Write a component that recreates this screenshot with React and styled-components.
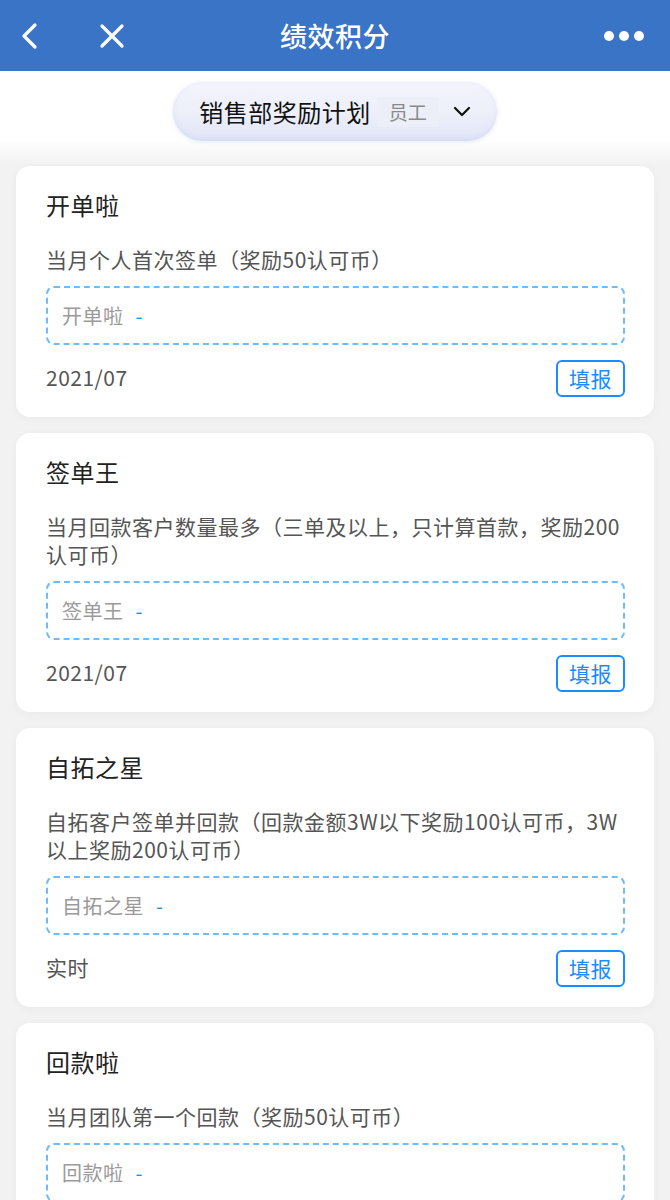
import React from 'react'
import styled, { createGlobalStyle } from 'styled-components'

const GlobalStyle = createGlobalStyle`
  body {
    margin: 0;
    background: #f2f2f2;
    font-family: "Noto Sans CJK SC", "Noto Sans", sans-serif;
  }
`

const items = [
  { title: '开单啦', desc: '当月个人首次签单（奖励50认可币）', time: '2021/07' },
  { title: '签单王', desc: '当月回款客户数量最多（三单及以上，只计算首款，奖励200认可币）', time: '2021/07' },
  { title: '自拓之星', desc: '自拓客户签单并回款（回款金额3W以下奖励100认可币，3W以上奖励200认可币）', time: '实时' },
  { title: '回款啦', desc: '当月团队第一个回款（奖励50认可币）', time: '2021/07' },
]

const App = () => {
  return (
    <Page>
      <GlobalStyle />
      <NavBar>
        <NavLeft>
          <IconBtn aria-label="back">
            <svg width="18" height="28" viewBox="0 0 18 28">
              <path d="M15 3 L4 14 L15 25" fill="none" stroke="#fff" strokeWidth="3.2" strokeLinecap="round" strokeLinejoin="round" />
            </svg>
          </IconBtn>
          <IconBtn aria-label="close">
            <svg width="26" height="26" viewBox="0 0 26 26">
              <path d="M3 3 L23 23 M23 3 L3 23" fill="none" stroke="#fff" strokeWidth="3.2" strokeLinecap="round" />
            </svg>
          </IconBtn>
        </NavLeft>
        <NavTitle>绩效积分</NavTitle>
        <Dots>
          <Dot />
          <Dot />
          <Dot />
        </Dots>
      </NavBar>

      <TopSection>
        <PlanPill>
          <PlanName>销售部奖励计划</PlanName>
          <RoleTag>员工</RoleTag>
          <svg width="18" height="12" viewBox="0 0 18 12">
            <path d="M2 2 L9 9 L16 2" fill="none" stroke="#111" strokeWidth="2.2" strokeLinecap="round" strokeLinejoin="round" />
          </svg>
        </PlanPill>
      </TopSection>

      <List>
        {items.map(item => (
          <Card key={item.title}>
            <CardTitle>{item.title}</CardTitle>
            <Desc>{item.desc}</Desc>
            <InputBox>
              <Placeholder>{item.title}</Placeholder>
              <Dash>-</Dash>
            </InputBox>
            <Footer>
              <Time>{item.time}</Time>
              <ReportBtn>填报</ReportBtn>
            </Footer>
          </Card>
        ))}
      </List>
    </Page>
  )
}

export default App

const Page = styled.div`
  min-height: 1200px;
  background: #f2f2f2;
`

const NavBar = styled.div`
  position: relative;
  height: 71px;
  background: #3a74c6;
  display: flex;
  align-items: center;
  justify-content: space-between;
  padding: 0 26px 0 20px;
  box-sizing: border-box;
`

const NavLeft = styled.div`
  display: flex;
  align-items: center;
  gap: 61px;
`

const IconBtn = styled.div`
  display: flex;
  align-items: center;
  justify-content: center;
  height: 30px;
`

const NavTitle = styled.div`
  position: absolute;
  left: 0;
  right: 0;
  text-align: center;
  pointer-events: none;
  color: #fff;
  font-size: 27px;
  font-weight: 500;
  letter-spacing: 0.5px;
`

const Dots = styled.div`
  display: flex;
  gap: 5px;
`

const Dot = styled.span`
  width: 10px;
  height: 10px;
  border-radius: 50%;
  background: #fff;
`

const TopSection = styled.div`
  display: flex;
  justify-content: center;
  padding: 11px 0 25px;
  background: linear-gradient(#ffffff 0%, #ffffff 72%, #f2f2f2 100%);
`

const PlanPill = styled.div`
  display: flex;
  align-items: center;
  height: 59px;
  padding: 0 26px;
  box-sizing: border-box;
  border-radius: 30px;
  background: linear-gradient(#f3f4fc 0%, #eef0fa 50%, #e0e5f7 100%);
  box-shadow: 0 1px 4px rgba(170, 180, 225, 0.3), inset 0 -2px 4px rgba(205, 212, 242, 0.5);
`

const PlanName = styled.span`
  font-size: 24px;
  color: #111;
  letter-spacing: 0.5px;
`

const RoleTag = styled.span`
  margin: 0 14px 0 6px;
  padding: 0 12px;
  height: 30px;
  line-height: 30px;
  background: #ecEff8;
  color: #8a8a8a;
  font-size: 19px;
  border-radius: 3px;
`

const List = styled.div`
  display: flex;
  flex-direction: column;
  gap: 16px;
  padding: 0 16px 16px;
`

const Card = styled.div`
  background: #fff;
  border-radius: 14px;
  padding: 24px 29px 20px 30px;
  box-shadow: 0 2px 10px rgba(0, 0, 0, 0.04);
`

const CardTitle = styled.div`
  font-size: 24px;
  line-height: 30px;
  color: #222;
  letter-spacing: 0.5px;
`

const Desc = styled.div`
  margin-top: 25px;
  font-size: 21px;
  line-height: 28px;
  color: #555;
  letter-spacing: 0.5px;
`

const InputBox = styled.div`
  margin-top: 13px;
  height: 59px;
  box-sizing: border-box;
  border: 2px dashed #70bcf8;
  border-radius: 8px;
  display: flex;
  align-items: center;
  padding-left: 14px;
`

const Placeholder = styled.span`
  font-size: 20px;
  color: #9a9a9a;
  letter-spacing: 0.5px;
`

const Dash = styled.span`
  margin-left: 12px;
  font-size: 20px;
  color: #1e8cf0;
`

const Footer = styled.div`
  margin-top: 15px;
  display: flex;
  align-items: center;
  justify-content: space-between;
`

const Time = styled.span`
  font-size: 21px;
  color: #555;
  letter-spacing: 0.5px;
  margin-top: -3px;
`

const ReportBtn = styled.button`
  height: 37px;
  padding: 0 11px;
  border: 2px solid #1a8cff;
  border-radius: 6px;
  background: #fff;
  color: #1a8cff;
  font-family: inherit;
  font-size: 21px;
  line-height: 1;
  letter-spacing: 0.5px;
`
